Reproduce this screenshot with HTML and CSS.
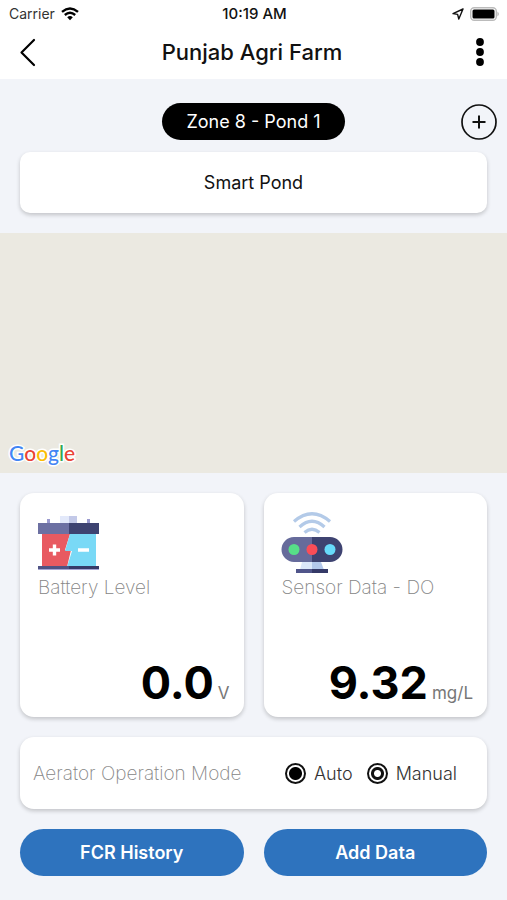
FILE: index.html
```html
<!DOCTYPE html>
<html lang="en">
<head>
<meta charset="utf-8">
<meta name="viewport" content="width=device-width, initial-scale=1">
<title>Punjab Agri Farm</title>
<link rel="stylesheet" href="styles.css">
</head>
<body>
<div class="status">
  <div class="status-left">
    <span>Carrier</span>
    <svg width="18" height="14" viewBox="0 0 18 14" fill="none" stroke="#000" stroke-width="2.4" aria-hidden="true"><path d="M1 4.900Q9-1.900 17 4.900M3.800 8Q9 3.600 14.200 8"/><path d="M6.200 10.200Q9 7.800 11.800 10.200L9 13.200Z" fill="#000" stroke="none"/></svg>
  </div>
  <span class="clock">10:19 AM</span>
  <div class="status-right">
    <svg width="12" height="12" viewBox="0 0 12 12" fill="none" stroke="#111" stroke-width="1.400" stroke-linejoin="round" aria-hidden="true"><path d="M11 1L1 5.600L5.600 6.400L6.800 11Z"/></svg>
    <svg width="30" height="14" viewBox="0 0 30 14" aria-hidden="true"><rect x=".7" y=".7" width="25.600" height="12.600" rx="3.500" fill="#fff" stroke="#bbb" stroke-width="1.400"/><rect x="2.500" y="2.500" width="22" height="9" rx="1.500"/><path d="M27.500 4.500Q30 7 27.500 9.500Z" fill="#aaa"/></svg>
  </div>
</div>
<header class="nav">
  <button class="icon-button" aria-label="Back"><svg width="16" height="28" viewBox="0 0 16 28" fill="none" stroke="#000" stroke-width="2.200" stroke-linecap="round" stroke-linejoin="round"><path d="M14 2L1.500 14.500L14 27"/></svg></button>
  <h1>Punjab Agri Farm</h1>
  <button class="icon-button" aria-label="More options"><svg width="8" height="28" viewBox="0 0 8 28"><circle cx="4" cy="4" r="3.900"/><circle cx="4" cy="14" r="3.900"/><circle cx="4" cy="24" r="3.900"/></svg></button>
</header>
<main>
  <section class="zone">
    <div class="zone-row">
      <button class="pill">Zone 8 - Pond 1</button>
      <button class="icon-button" aria-label="Add pond"><svg width="36" height="36" viewBox="0 0 36 36" fill="none" stroke="#111"><circle cx="18" cy="18" r="17" stroke-width="1.700"/><path d="M11.500 18H24.500M18 11.500V24.500" stroke-width="2"/></svg></button>
    </div>
    <div class="card smart">Smart Pond</div>
  </section>
  <section class="map" aria-label="Map">
    <div class="google"><span class="blue">G</span><span class="red">o</span><span class="yellow">o</span><span class="blue">g</span><span class="green">l</span><span class="red">e</span></div>
  </section>
  <section class="panel">
    <article class="card reading">
      <svg width="62" height="60" viewBox="0 0 62 60" aria-hidden="true">
        <path fill="#9b9bcf" d="M9 5h3v6H9zM49 5h3v6h-3z"/><path fill="#e3e9fa" d="M22 2h9v9h-9z"/><path fill="#c3c9e8" d="M31 2h8v9h-8z"/>
        <path fill="#e85a61" d="M4 20h28l-5 16h6l-4 17H4z"/><path fill="#79d9f6" d="M32 20h26v33H29l5-16h-7z"/>
        <path fill="#6c70a2" d="M0 9h31v11H0z"/><path fill="#3e4371" d="M31 9h30v11H31z"/><path fill="#4f5384" d="M0 52h31v3H0z"/><path fill="#363b68" d="M31 52h30v3H31z"/><path fill="#a6a6d4" d="M0 55h61v1H0z"/>
        <path d="M11 36h11M16.500 30.500v11M40 36h11" stroke="#fff" stroke-width="3.400"/>
      </svg>
      <h2>Battery Level</h2>
      <p class="value"><strong>0.0</strong><span>V</span></p>
    </article>
    <article class="card reading">
      <svg width="62" height="60" viewBox="0 0 62 60" aria-hidden="true">
        <g fill="none" stroke="#b3cae8" stroke-width="3.200"><path d="M12 7.500Q30-8 48 7.500M17.500 13Q30 1.500 42.500 13M22.500 18.500Q30 12 37.500 18.500"/></g>
        <path fill="#dce8fa" d="M20 48h10v8H18z"/><path fill="#b3c8eb" d="M30 48h9l3 8H30z"/>
        <path fill="#666b9b" d="M30 23H12a12.500 12.500 0 0 0 0 25H30z"/><path fill="#3e4371" d="M30 23h18a12.500 12.500 0 0 1 0 25H30z"/>
        <circle cx="12" cy="35.500" r="5.500" fill="#57df88"/><circle cx="30" cy="35.500" r="5.500" fill="#fa4d57"/><circle cx="48" cy="35.500" r="5.500" fill="#67dafa"/>
        <path fill="#50558a" d="M14 55h16v4H14z"/><path fill="#343967" d="M30 55h16v4H30z"/>
      </svg>
      <h2>Sensor Data - DO</h2>
      <p class="value"><strong>9.32</strong><span>mg/L</span></p>
    </article>
    <div class="card mode" role="radiogroup" aria-labelledby="mode-title">
      <span class="mode-title" id="mode-title">Aerator Operation Mode</span>
      <label><input type="radio" name="mode" checked>Auto</label>
      <label><input type="radio" name="mode">Manual</label>
    </div>
    <button class="action">FCR History</button>
    <button class="action">Add Data</button>
  </section>
</main>
</body>
</html>
```
FILE: styles.css
```css
* { box-sizing: border-box; }
body { margin: 0; min-height: 100vh; background: #f2f4f9; color: #111; font-family: Inter, "Liberation Sans", sans-serif; }
h1, h2, p { margin: 0; }
button { border: 0; padding: 0; font: inherit; cursor: pointer; }
svg { display: block; flex: none; overflow: visible; }

.status { display: grid; grid-template-columns: 1fr auto 1fr; align-items: center; height: 27px; padding: 0 7px 0 9px; background: #fff; font-size: 14px; }
.status-left, .status-right { display: flex; align-items: center; gap: 6px; }
.status-left { color: #333; }
.status-right { justify-content: flex-end; }
.clock { font-size: 15px; font-weight: 500; }

.nav { display: grid; grid-template-columns: 1fr auto 1fr; align-items: center; height: 52px; padding: 0 23px 2px 20px; background: #fff; }
.nav h1 { font-size: 22px; font-weight: 500; }
.nav .icon-button:first-child { justify-self: start; }
.nav .icon-button:last-child { justify-self: end; }
.icon-button { background: none; }

.zone { padding: 24px 20px 20px; }
.zone-row { display: grid; grid-template-columns: 1fr auto 1fr; align-items: center; margin: 0 -10px 12px; }
.pill { grid-column: 2; height: 37px; padding: 0 24px; border-radius: 19px; background: #000; color: #fff; font-size: 18px; }
.zone-row .icon-button { justify-self: end; }
.card { background: #fff; border-radius: 14px; box-shadow: 0 2px 4px rgba(0, 0, 0, .2); }
.smart { display: flex; align-items: center; justify-content: center; height: 61px; border-radius: 10px; font-size: 18px; }

.map { display: flex; align-items: flex-end; height: 240px; padding: 0 9px 6px; background: #ebe9e1; }
.google { font-family: Lato, sans-serif; font-size: 21px; font-weight: 500; line-height: 28px; -webkit-text-stroke: 3px #fff; paint-order: stroke fill; }
.blue { color: #4285f4; }
.red { color: #ea4335; }
.yellow { color: #fbbc05; }
.green { color: #34a853; }

.panel { display: grid; grid-template-columns: 1fr 1fr; gap: 20px; padding: 20px; }
.reading { display: flex; flex-direction: column; height: 224px; padding: 21px 14px 6px 18px; }
.reading h2 { margin-top: 2px; color: #858585; font-size: 19px; line-height: 24px; font-weight: 200; }
.value { display: flex; align-items: baseline; justify-content: flex-end; gap: 4px; margin-top: auto; color: #777; font-size: 17px; line-height: 56px; }
.value span { line-height: 32px; }
.value strong { color: #000; font-size: 45px; font-weight: 700; }
.mode { grid-column: 1 / -1; display: flex; flex-wrap: wrap; align-items: center; min-height: 72px; padding: 0 30px 0 13px; font-size: 18px; font-weight: 300; }
.mode-title { margin-right: auto; color: #858585; font-size: 19px; font-weight: 200; }
.mode label { display: flex; align-items: center; gap: 8px; margin-left: 14px; color: #333; }
.mode input { appearance: none; width: 21px; height: 21px; margin: 0; border: 2px solid #111; border-radius: 50%; background: radial-gradient(circle, #fff 0 3px, #111 4px 6px, #fff 7px); }
.mode input:checked { background: radial-gradient(circle, #000 0 6px, #fff 7px); }
.action { height: 47px; border-radius: 24px; background: #2e73be; color: #fff; font-size: 18px; font-weight: 600; }
```
